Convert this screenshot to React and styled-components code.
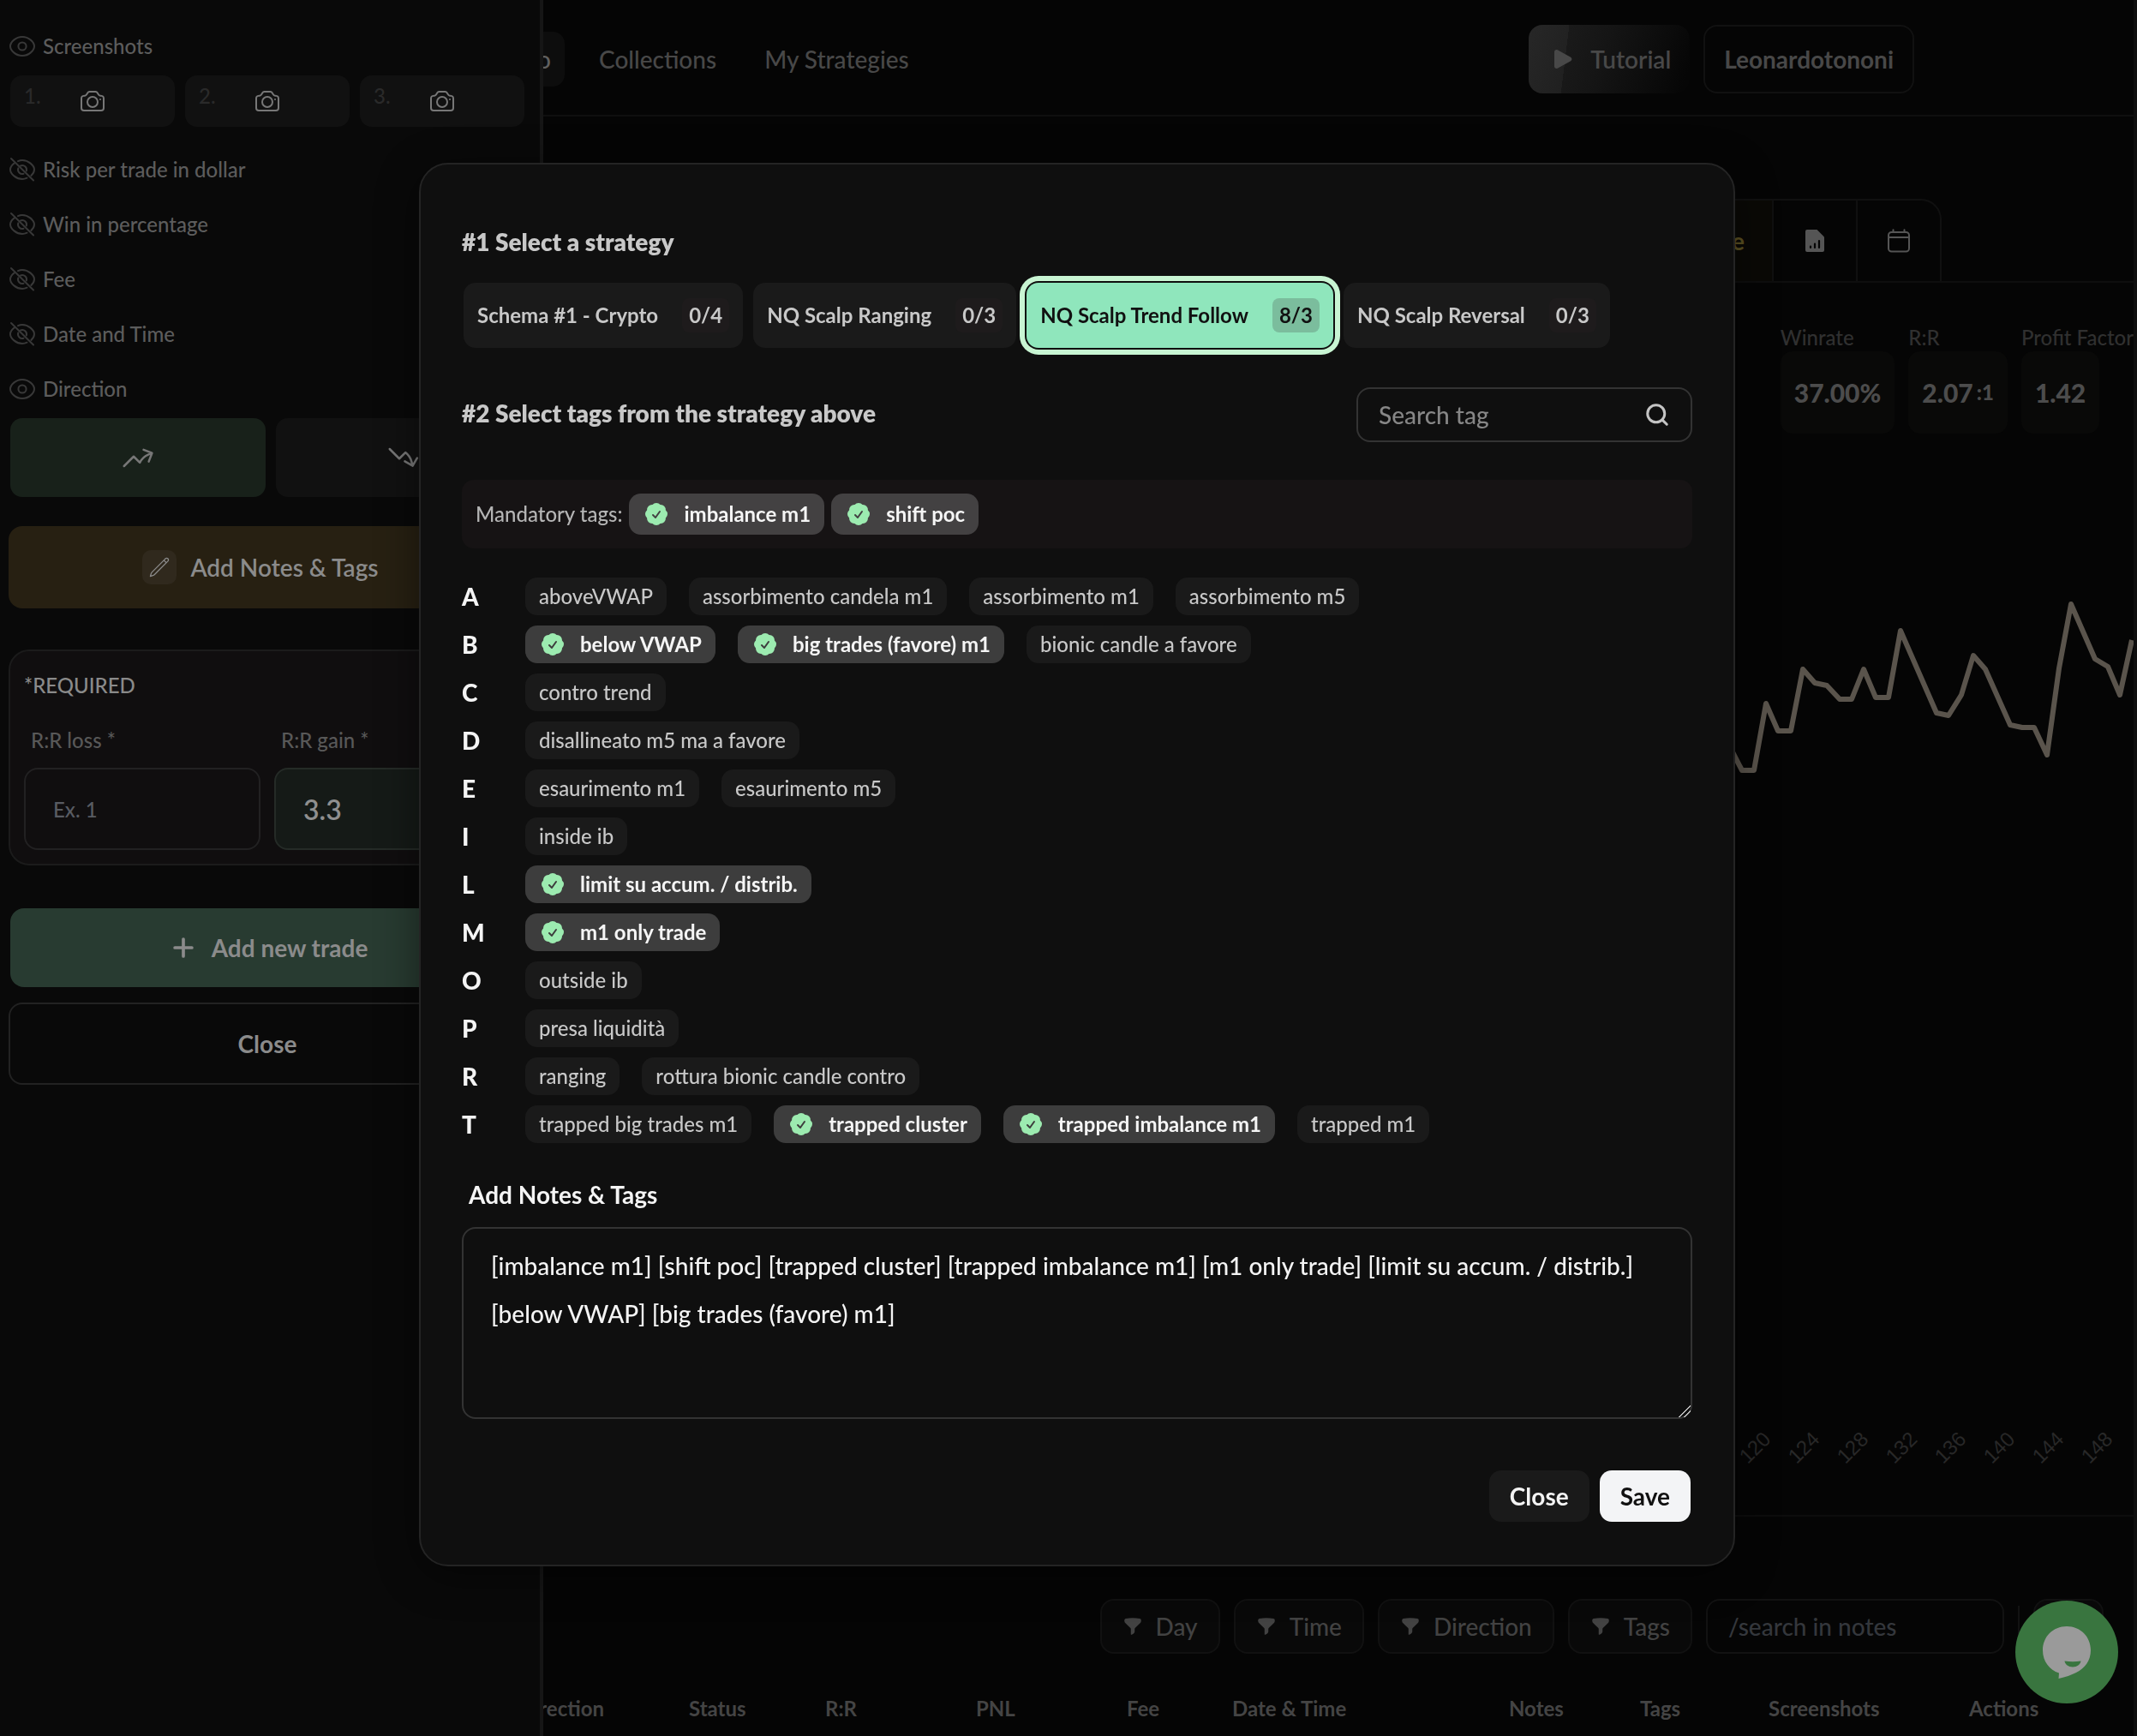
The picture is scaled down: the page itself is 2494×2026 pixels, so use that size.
import React, { useState } from "react";
import styled, { createGlobalStyle, css } from "styled-components";
import {
  HiCheckBadge,
  HiFunnel,
  HiPlay,
  HiOutlineCamera,
  HiOutlinePencil,
  HiOutlineArrowTrendingUp,
  HiOutlineArrowTrendingDown,
} from "react-icons/hi2";
import { Search, Plus } from "lucide-react";

const GlobalStyle = createGlobalStyle`
  *, *::before, *::after { box-sizing: border-box; }
  body {
    margin: 0;
    background: #050505;
    color: #484848;
    font-family: Lato, "Noto Sans", sans-serif;
    font-size: 24px;
    line-height: 32px;
    font-weight: 500;
  }
  button, input, textarea { font: inherit; color: inherit; margin: 0; }
  button { border: 0; background: none; padding: 0; cursor: pointer; }
  h2, p { margin: 0; }
  a { color: inherit; text-decoration: none; }
`;

/* ---------- page frame ---------- */

const Page = styled.div`
  display: grid;
  grid-template-columns: 634px minmax(0, 1fr);
  height: 100vh;
  overflow: hidden;
  border-right: 4px solid #0e0e0e;
`;

const Sidebar = styled.aside`
  background: #090909;
  border-right: 4px solid #161616;
  padding: 34px 10px 0;
`;

const Main = styled.main`
  min-width: 0;
  overflow: hidden;
`;

/* ---------- sidebar ---------- */

const FieldToggle = styled.button`
  display: flex;
  align-items: center;
  gap: 8px;
  height: 40px;
  margin-bottom: ${(p) => p.$gap || 24}px;
  color: #5c5c5c;
  svg { color: #383838; }
`;

const ShotGrid = styled.div`
  display: grid;
  grid-template-columns: repeat(3, 192px);
  gap: 12px;
  margin: 0 0 30px 2px;
`;

const ShotButton = styled.button`
  display: grid;
  grid-template-columns: 1fr 32px 1fr;
  align-items: center;
  height: 60px;
  padding: 0 16px;
  border-radius: 14px;
  background: #111111;
  color: #777777;
`;

const ShotNumber = styled.span`
  align-self: start;
  padding-top: 8px;
  text-align: left;
  color: #2a2a2a;
`;

const DirectionRow = styled.div`
  display: grid;
  grid-template-columns: 1fr 1fr;
  gap: 12px;
  margin: 0 0 34px 2px;
`;

const DirectionButton = styled.button`
  display: flex;
  align-items: center;
  justify-content: center;
  height: 92px;
  border-radius: 14px;
  color: #777777;
  background: ${(p) => (p.$active ? "#18211a" : "#111111")};
`;

const WideButton = styled.button`
  display: flex;
  align-items: center;
  justify-content: center;
  gap: 16px;
  width: calc(100% - 6px);
  height: 96px;
  border-radius: 16px;
  font-size: 28px;
  font-weight: 700;
  color: #8b8b8b;
  ${(p) =>
    p.$tone === "note" &&
    css`
      background: #272012;
      font-weight: 600;
      padding-right: 16px;
    `}
  ${(p) =>
    p.$tone === "add" &&
    css`
      background: #283b31;
      height: 92px;
      width: calc(100% - 8px);
      margin: 50px 0 18px 2px;
    `}
  ${(p) =>
    p.$tone === "plain" &&
    css`
      border: 2px solid #222222;
    `}
`;

const PencilBox = styled.span`
  display: flex;
  align-items: center;
  justify-content: center;
  width: 40px;
  height: 40px;
  border-radius: 10px;
  background: #30291d;
`;

const RequiredPanel = styled.section`
  width: calc(100% - 6px);
  margin-top: 48px;
  padding: 24px 16px 16px;
  border: 2px solid #1b1b1b;
  border-radius: 24px;
  background: #100e0f;
  color: #8a8a8a;
`;

const RatioGrid = styled.div`
  display: grid;
  grid-template-columns: 1fr 1fr;
  gap: 16px;
  margin-top: 32px;
`;

const RatioField = styled.div`
  display: flex;
  flex-direction: column;
  gap: 16px;
  label { padding-left: 8px; color: #585858; }
`;

const RatioInput = styled.input`
  width: 100%;
  height: 96px;
  padding: 0 32px;
  border: 2px solid ${(p) => (p.$filled ? "#252b27" : "#222122")};
  border-radius: 16px;
  background: ${(p) => (p.$filled ? "#151a17" : "transparent")};
  font-size: ${(p) => (p.$filled ? 32 : 24)}px;
  font-weight: ${(p) => (p.$filled ? 600 : 500)};
  color: #8f8f8f;
  outline: 0;
  &::placeholder { color: #585b62; opacity: 1; }
`;

/* ---------- header ---------- */

const Header = styled.header`
  display: flex;
  align-items: center;
  height: 136px;
  padding: 4px 256px 0 0;
  border-bottom: 2px solid #0f0f0f;
  font-size: 28px;
`;

const Nav = styled.nav`
  display: flex;
  align-items: center;
  flex: 1;
  gap: 56px;
`;

const CurrentLink = styled.a`
  display: flex;
  align-items: center;
  justify-content: flex-end;
  width: 25px;
  height: 64px;
  margin-right: -16px;
  padding-right: 16px;
  overflow: hidden;
  border-radius: 0 14px 14px 0;
  background: #0d0d0d;
  color: #606060;
`;

const HeaderActions = styled.div`
  display: flex;
  gap: 16px;
`;

const TutorialButton = styled.button`
  display: flex;
  align-items: center;
  gap: 16px;
  height: 80px;
  padding: 0 22px 0 24px;
  border-radius: 16px;
  font-weight: 600;
  background: linear-gradient(97deg, rgba(255, 255, 255, 0.035) 24%, transparent 24%),
    linear-gradient(110deg, #1f1f1f, #151515 45%, #060606 95%);
`;

const UserButton = styled.button`
  height: 80px;
  padding: 0 22px;
  border: 2px solid #111111;
  border-radius: 16px;
  font-weight: 700;
`;

/* ---------- view tabs and stats ---------- */

const TabBar = styled.div`
  display: flex;
  justify-content: flex-end;
  margin-top: 96px;
  padding-right: 224px;
  border-bottom: 2px solid #0e0e0e;
`;

const Tab = styled.button`
  display: flex;
  align-items: center;
  justify-content: ${(p) => (p.$active ? "flex-end" : "center")};
  width: 98px;
  height: 96px;
  padding: ${(p) => (p.$active ? "0 32px" : "0")};
  border-top: 2px solid #101010;
  border-right: 2px solid #101010;
  background: ${(p) => (p.$active ? "#0a0906" : "transparent")};
  color: ${(p) => (p.$active ? "#5c5122" : "#555555")};
  font-weight: 700;
  font-size: 28px;
  &:last-child { border-top-right-radius: 24px; }
`;

const Stats = styled.div`
  display: flex;
  justify-content: flex-end;
  gap: 16px;
  padding-top: 48px;
`;

const Stat = styled.div`
  display: flex;
  flex-direction: column;
  align-items: flex-start;
  color: #303030;
  white-space: nowrap;
`;

const StatValue = styled.strong`
  display: flex;
  align-items: center;
  gap: 4px;
  height: 96px;
  padding: 0 16px;
  border-radius: 14px;
  background: #090908;
  color: #4c4c4c;
  font-size: 30px;
  font-weight: 900;
  small { font-size: 24px; }
`;

/* ---------- chart ---------- */

const ChartArea = styled.div`
  display: flex;
  justify-content: flex-end;
  padding-top: 134px;
  border-bottom: 2px solid #0d0d0d;
  svg { display: block; }
  text { font-family: "Liberation Sans", Arial, sans-serif; font-size: 24px; fill: #282828; }
`;

/* ---------- trades list ---------- */

const FilterBar = styled.div`
  display: flex;
  align-items: center;
  justify-content: flex-end;
  gap: 16px;
  padding: 96px 35px 48px 0;
  font-size: 28px;
`;

const FilterButton = styled.button`
  display: flex;
  align-items: center;
  gap: 15px;
  height: 64px;
  min-width: 82px;
  padding: 0 24px;
  border: 2px solid #111111;
  border-radius: 16px;
  background: #090909;
  color: #424242;
`;

const NotesSearch = styled.input`
  width: 348px;
  height: 64px;
  padding: 0 24px;
  border: 2px solid #121212;
  border-radius: 16px;
  background: transparent;
  outline: 0;
  &::placeholder { color: #34373c; opacity: 1; }
`;

const BarDivider = styled.span`
  width: 2px;
  height: 48px;
  background: #121212;
`;

const TradeTable = styled.table`
  width: 100%;
  table-layout: fixed;
  border-collapse: collapse;
  color: #444444;
  th { padding: 0; text-align: left; font-weight: 700; white-space: nowrap; }
`;

const ClippedLabel = styled.div`
  display: flex;
  justify-content: flex-end;
  width: 71px;
  overflow: hidden;
`;

/* ---------- modal ---------- */

const Overlay = styled.div`
  position: fixed;
  inset: 0;
  display: flex;
  justify-content: center;
  align-items: flex-start;
  padding: 190px 0 0 20px;
`;

const Modal = styled.div`
  width: 100%;
  max-width: 1536px;
  padding: 72px 48px 50px;
  border: 2px solid #242424;
  border-radius: 34px;
  background: #0f0f0f;
  box-shadow: 0 10px 50px rgba(0, 0, 0, 0.45);
  color: #c8c8c8;
`;

const Heading = styled.h2`
  padding-bottom: 4px;
  font-size: 28px;
  line-height: 36px;
  font-weight: 800;
`;

const StrategyRow = styled.div`
  display: flex;
  gap: 12px;
  padding: 26px 2px 46px;
`;

const StrategyCount = styled.span`
  padding: 4px 8px;
  border-radius: 8px;
  background: ${(p) => (p.$active ? "#7bbd9d" : "#1e1b1c")};
`;

const StrategyButton = styled.button`
  display: flex;
  align-items: center;
  gap: 28px;
  height: 76px;
  padding: 0 16px;
  border-radius: 14px;
  font-weight: 700;
  background: #1a1a1a;
  ${(p) =>
    p.$active &&
    css`
      background: #8fe6bc;
      color: #111111;
      box-shadow: 0 0 0 2px #0f0f0f, 0 0 0 8px #c8f5d3;
    `}
`;

const TagsHeader = styled.div`
  display: flex;
  align-items: center;
  justify-content: space-between;
`;

const SearchBox = styled.label`
  display: flex;
  align-items: center;
  width: 392px;
  height: 64px;
  padding: 0 24px;
  border: 2px solid #333333;
  border-radius: 16px;
  color: #c4c4c4;
  font-size: 28px;
  input {
    flex: 1;
    min-width: 0;
    padding: 0;
    border: 0;
    outline: 0;
    background: transparent;
    &::placeholder { color: #868686; opacity: 1; }
  }
`;

const MandatoryBar = styled.div`
  display: flex;
  align-items: center;
  gap: 8px;
  min-height: 80px;
  margin: 44px 0 34px;
  padding: 16px;
  border-radius: 14px;
  background: #161314;
  color: #b4b4b4;
`;

const TagChip = styled.button`
  display: flex;
  align-items: center;
  gap: 16px;
  height: ${(p) => (p.$tall ? 48 : 44)}px;
  padding: 0 16px;
  border-radius: 14px;
  background: #1a1a1a;
  svg { color: #9cebb0; }
  ${(p) =>
    p.$selected &&
    css`
      background: ${p.$tall ? "#434142" : "#3d3d3d"};
      color: #f5f5f5;
      font-weight: 700;
    `}
`;

const TagList = styled.div`
  display: grid;
  gap: 12px;
`;

const TagRow = styled.div`
  display: grid;
  grid-template-columns: 74px 1fr;
  align-items: center;
`;

const Letter = styled.span`
  font-size: 28px;
  font-weight: 900;
  color: #f4f4f4;
`;

const TagGroup = styled.div`
  display: flex;
  flex-wrap: wrap;
  gap: 12px 26px;
`;

const NotesLabel = styled.label`
  display: block;
  margin: 42px 0 20px 8px;
  font-size: 28px;
  line-height: 36px;
  font-weight: 700;
  color: #f4f4f4;
`;

const NotesArea = styled.textarea`
  display: block;
  width: 100%;
  height: 224px;
  padding: 15px 32px;
  border: 2px solid #333333;
  border-radius: 16px;
  background: transparent;
  color: #f4f4f4;
  font-size: 28px;
  line-height: 56px;
  outline: 0;
  resize: vertical;
  &::-webkit-resizer {
    background: linear-gradient(
      135deg,
      transparent 50%,
      #bbbbbb 50% 57%,
      transparent 57% 72%,
      #bbbbbb 72% 79%,
      transparent 79%
    );
  }
`;

const ModalActions = styled.div`
  display: flex;
  justify-content: flex-end;
  gap: 12px;
  margin-top: 60px;
  padding-right: 2px;
`;

const ModalButton = styled.button`
  height: 60px;
  padding: 0 24px;
  border-radius: 14px;
  font-size: 28px;
  font-weight: 700;
  background: ${(p) => (p.$primary ? "#f3f4f6" : "#1a1a1a")};
  color: ${(p) => (p.$primary ? "#111111" : "#f4f4f4")};
`;

const ChatButton = styled.button`
  position: fixed;
  right: 22px;
  bottom: 38px;
  width: 120px;
  height: 120px;
  border-radius: 50%;
  background: #39753f;
  svg { display: block; }
`;

/* ---------- drawings ---------- */

function EyeIcon({ off }) {
  return (
    <svg width="32" height="32" viewBox="0 0 32 32" fill="none" stroke="currentColor" strokeWidth="2" strokeLinecap="round">
      {off ? (
        <>
          <path d="M11 6.200C12.500 5.500 14.200 5 16 5C23 5 30 11 30 16C30 18.300 28.600 20.800 26.300 22.900M21.500 25.700C19.800 26.500 18 27 16 27C9 27 2 21 2 16C2 13.300 3.900 10.500 6.800 8.400" />
          <path d="M14 11.500A5 5 0 0 1 20.800 17.500M17.500 20.800A5 5 0 0 1 11.300 14.400" />
          <path d="M3 3L29 28.500" />
        </>
      ) : (
        <>
          <path d="M2 16C2 11 8.500 5 16 5S30 11 30 16S23.500 27 16 27S2 21 2 16Z" />
          <circle cx="16" cy="16" r="4.600" />
        </>
      )}
    </svg>
  );
}

function ReportIcon() {
  return (
    <svg width="24" height="28" viewBox="0 0 24 28">
      <path d="M3 1H14.500L23 9.500V25A2 2 0 0 1 21 27H3A2 2 0 0 1 1 25V3A2 2 0 0 1 3 1Z" fill="currentColor" />
      <path d="M7 20.500V22M12 17.500V22M17 14V22" stroke="#050505" strokeWidth="2.200" strokeLinecap="round" />
    </svg>
  );
}

function CalendarIcon() {
  return (
    <svg width="28" height="28" viewBox="0 0 28 28" fill="none" stroke="currentColor" strokeWidth="2" strokeLinecap="round">
      <rect x="2" y="4" width="24" height="22.500" rx="3.500" />
      <path d="M2.500 10H25.500M7.500 1.200V4M20.500 1.200V4" />
    </svg>
  );
}

function ChatIcon() {
  return (
    <svg width="120" height="120" viewBox="0 0 120 120">
      <path
        d="M60 30C76 30 88 42 88 58C88 70 81 79 71 84C65 87 59 89 50.500 91L51 84.500C40 81 32 71 32 58C32 42 44 30 60 30Z"
        fill="#9a9a9a"
      />
      <path d="M57.500 70.500C64 71.500 70 71.500 76.500 70.500C76 74.500 72 77.500 67 77.500S58 74.500 57.500 70.500Z" fill="#39753f" />
    </svg>
  );
}

const equity =
  "28,230 43,259 57,259 71,181 85,213 100,213 114,141 128,157 142,160 157,176 171,176 185,141 199,174 214,174 228,96 270,192 284,195 299,171 313,125 327,141 356,206 370,209 384,209 399,241 413,140 427,65 455,129 470,138 484,171 498,107";
const ticks = [120, 124, 128, 132, 136, 140, 144, 148];

function EquityChart() {
  return (
    <ChartArea>
      <svg width="470" height="1128" viewBox="30 0 470 1128">
        <polyline points={equity} fill="none" stroke="#5a544c" strokeWidth="6" strokeLinejoin="round" />
        {ticks.map((t, i) => (
          <text key={t} transform={`translate(${78 + i * 57} 1041) rotate(-45)`} textAnchor="end">
            {t}
          </text>
        ))}
      </svg>
    </ChartArea>
  );
}

/* ---------- data ---------- */

const strategies = [
  ["Schema #1 - Crypto", "0/4"],
  ["NQ Scalp Ranging", "0/3"],
  ["NQ Scalp Trend Follow", "8/3"],
  ["NQ Scalp Reversal", "0/3"],
];

const tags = {
  A: ["aboveVWAP", "assorbimento candela m1", "assorbimento m1", "assorbimento m5"],
  B: ["below VWAP", "big trades (favore) m1", "bionic candle a favore"],
  C: ["contro trend"],
  D: ["disallineato m5 ma a favore"],
  E: ["esaurimento m1", "esaurimento m5"],
  I: ["inside ib"],
  L: ["limit su accum. / distrib."],
  M: ["m1 only trade"],
  O: ["outside ib"],
  P: ["presa liquidità"],
  R: ["ranging", "rottura bionic candle contro"],
  T: ["trapped big trades m1", "trapped cluster", "trapped imbalance m1", "trapped m1"],
};

const picked = new Set([
  "below VWAP",
  "big trades (favore) m1",
  "limit su accum. / distrib.",
  "m1 only trade",
  "trapped cluster",
  "trapped imbalance m1",
]);

const hiddenFields = ["Risk per trade in dollar", "Win in percentage", "Fee", "Date and Time"];

const columns = [
  ["Status", 159],
  ["R:R", 176],
  ["PNL", 176],
  ["Fee", 123],
  ["Date & Time", 323],
  ["Notes", 153],
  ["Tags", 150],
  ["Screenshots", 234],
  ["Actions", 192],
];

function Tag({ name, selected, tall }) {
  return (
    <TagChip type="button" $selected={selected} $tall={tall} aria-pressed={!!selected}>
      {selected && <HiCheckBadge size={32} />}
      {name}
    </TagChip>
  );
}

function TradeForm() {
  return (
    <Sidebar>
      <FieldToggle type="button" $gap={14}>
        <EyeIcon />
        Screenshots
      </FieldToggle>
      <ShotGrid>
        {[1, 2, 3].map((n) => (
          <ShotButton type="button" key={n}>
            <ShotNumber>{n}.</ShotNumber>
            <HiOutlineCamera size={32} />
          </ShotButton>
        ))}
      </ShotGrid>
      {hiddenFields.map((f) => (
        <FieldToggle type="button" key={f}>
          <EyeIcon off />
          {f}
        </FieldToggle>
      ))}
      <FieldToggle type="button" $gap={14}>
        <EyeIcon />
        Direction
      </FieldToggle>
      <DirectionRow>
        <DirectionButton type="button" $active aria-label="Long">
          <HiOutlineArrowTrendingUp size={40} />
        </DirectionButton>
        <DirectionButton type="button" aria-label="Short">
          <HiOutlineArrowTrendingDown size={40} />
        </DirectionButton>
      </DirectionRow>
      <WideButton type="button" $tone="note">
        <PencilBox>
          <HiOutlinePencil size={26} strokeWidth={1.2} />
        </PencilBox>
        Add Notes &amp; Tags
      </WideButton>
      <RequiredPanel>
        <p>*REQUIRED</p>
        <RatioGrid>
          <RatioField>
            <label htmlFor="rr-loss">R:R loss *</label>
            <RatioInput id="rr-loss" placeholder="Ex. 1" />
          </RatioField>
          <RatioField>
            <label htmlFor="rr-gain">R:R gain *</label>
            <RatioInput id="rr-gain" $filled defaultValue="3.3" />
          </RatioField>
        </RatioGrid>
      </RequiredPanel>
      <WideButton type="button" $tone="add">
        <Plus size={34} strokeWidth={2.6} />
        Add new trade
      </WideButton>
      <WideButton type="button" $tone="plain">
        Close
      </WideButton>
    </Sidebar>
  );
}

function Dashboard() {
  return (
    <Main>
      <Header>
        <Nav>
          <CurrentLink href="#">o</CurrentLink>
          <a href="#collections">Collections</a>
          <a href="#strategies">My Strategies</a>
        </Nav>
        <HeaderActions>
          <TutorialButton type="button">
            <HiPlay size={32} />
            Tutorial
          </TutorialButton>
          <UserButton type="button">Leonardotononi</UserButton>
        </HeaderActions>
      </Header>
      <TabBar>
        <Tab type="button" $active>
          e
        </Tab>
        <Tab type="button" aria-label="Report">
          <ReportIcon />
        </Tab>
        <Tab type="button" aria-label="Calendar">
          <CalendarIcon />
        </Tab>
      </TabBar>
      <Stats>
        <Stat>
          Winrate
          <StatValue>37.00%</StatValue>
        </Stat>
        <Stat>
          R:R
          <StatValue>
            2.07 <small>:1</small>
          </StatValue>
        </Stat>
        <Stat>
          Profit Factor
          <StatValue>1.42</StatValue>
        </Stat>
      </Stats>
      <EquityChart />
      <FilterBar>
        {["Day", "Time", "Direction", "Tags"].map((f) => (
          <FilterButton type="button" key={f}>
            <HiFunnel size={24} />
            {f}
          </FilterButton>
        ))}
        <NotesSearch placeholder="/search in notes" aria-label="Search in notes" />
        <BarDivider />
        <FilterButton type="button" aria-label="More" />
      </FilterBar>
      <TradeTable>
        <colgroup>
          <col style={{ width: 170 }} />
          {columns.map(([name, width]) => (
            <col key={name} style={{ width }} />
          ))}
        </colgroup>
        <thead>
          <tr>
            <th>
              <ClippedLabel>Direction</ClippedLabel>
            </th>
            {columns.map(([name]) => (
              <th key={name}>{name}</th>
            ))}
          </tr>
        </thead>
      </TradeTable>
    </Main>
  );
}

function TagsModal() {
  const [notes, setNotes] = useState(
    "[imbalance m1] [shift poc] [trapped cluster] [trapped imbalance m1] [m1 only trade] [limit su accum. / distrib.] [below VWAP] [big trades (favore) m1]"
  );
  return (
    <Overlay>
      <Modal role="dialog" aria-label="Add Notes & Tags">
        <Heading>#1 Select a strategy</Heading>
        <StrategyRow>
          {strategies.map(([name, count], i) => (
            <StrategyButton type="button" key={name} $active={i === 2}>
              {name}
              <StrategyCount $active={i === 2}>{count}</StrategyCount>
            </StrategyButton>
          ))}
        </StrategyRow>
        <TagsHeader>
          <Heading>#2 Select tags from the strategy above</Heading>
          <SearchBox>
            <input placeholder="Search tag" aria-label="Search tag" />
            <Search size={30} strokeWidth={2.4} />
          </SearchBox>
        </TagsHeader>
        <MandatoryBar>
          Mandatory tags:
          <Tag name="imbalance m1" selected tall />
          <Tag name="shift poc" selected tall />
        </MandatoryBar>
        <TagList>
          {Object.entries(tags).map(([letter, names]) => (
            <TagRow key={letter}>
              <Letter>{letter}</Letter>
              <TagGroup>
                {names.map((n) => (
                  <Tag key={n} name={n} selected={picked.has(n)} />
                ))}
              </TagGroup>
            </TagRow>
          ))}
        </TagList>
        <NotesLabel htmlFor="notes">Add Notes &amp; Tags</NotesLabel>
        <NotesArea id="notes" spellCheck={false} value={notes} onChange={(e) => setNotes(e.target.value)} />
        <ModalActions>
          <ModalButton type="button">Close</ModalButton>
          <ModalButton type="button" $primary>
            Save
          </ModalButton>
        </ModalActions>
      </Modal>
    </Overlay>
  );
}

export default function App() {
  return (
    <>
      <GlobalStyle />
      <Page>
        <TradeForm />
        <Dashboard />
      </Page>
      <TagsModal />
      <ChatButton type="button" aria-label="Open chat">
        <ChatIcon />
      </ChatButton>
    </>
  );
}
